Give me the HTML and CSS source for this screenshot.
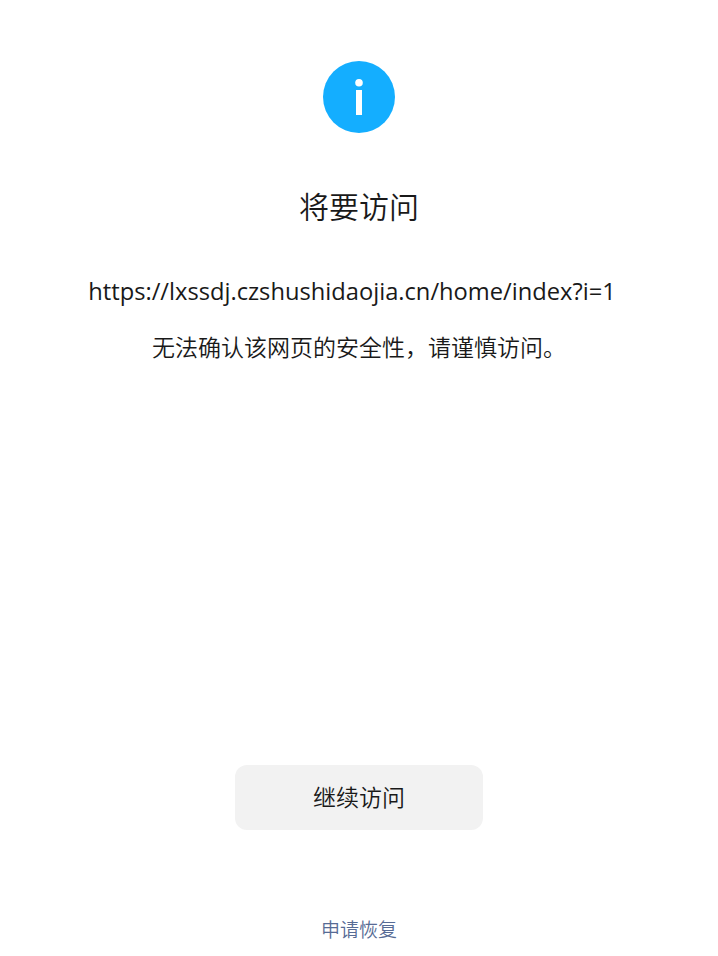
FILE: index.html
```html
<!DOCTYPE html>
<html lang="zh-CN">
<head>
    <meta charset="UTF-8">
    <meta name="viewport" content="width=device-width, initial-scale=1.0">
    <title>将要访问</title>
    <link rel="stylesheet" href="styles.css">
</head>
<body>

    <div class="container">
        <svg class="icon" viewBox="0 0 72 72">
            <circle cx="36" cy="36" r="36" fill="#14aeff"/>
            <circle cx="36" cy="21.7" r="3.8" fill="#fff"/>
            <rect x="33" y="29" width="6" height="25" fill="#fff"/>
        </svg>
        <h2 class="title">将要访问</h2>
        <p class="url">https://lxssdj.czshushidaojia.cn/home/index?i=1</p>
        <p class="desc">无法确认该网页的安全性，请谨慎访问。</p>
        <button class="btn">继续访问</button>
        <a class="link" href="#">申请恢复</a>
    </div>

</body>
</html>
```

FILE: styles.css
```css
* {
    box-sizing: border-box;
}
body {
    margin: 0;
    background-color: #fff;
    color: #191919;
    font-family: "Noto Sans CJK SC", sans-serif;
}
.container {
    display: flex;
    flex-direction: column;
    align-items: center;
    height: 956px;
    padding-top: 61px;
}
.icon {
    width: 72px;
    height: 72px;
}
.title {
    margin: 48px 0 0;
    font-size: 30px;
    font-weight: 350;
    line-height: 48px;
}
.url {
    margin: 42px 14px 0 0;
    font-family: "Open Sans", sans-serif;
    font-size: 23.7px;
    line-height: 40px;
    white-space: nowrap;
}
.desc {
    margin: 15px 0 0;
    font-size: 23px;
    font-weight: 350;
    line-height: 40px;
    white-space: nowrap;
}
.btn {
    width: 248px;
    height: 65px;
    margin-top: auto;
    padding: 0 0 3px;
    font-family: inherit;
    font-size: 23px;
    font-weight: 350;
    color: #191919;
    background-color: #f2f2f2;
    border: none;
    border-radius: 12px;
    cursor: pointer;
}
.link {
    margin: 83px 0 12px;
    font-size: 19px;
    font-weight: 350;
    line-height: 31px;
    color: #576b95;
    text-decoration: none;
}
```
